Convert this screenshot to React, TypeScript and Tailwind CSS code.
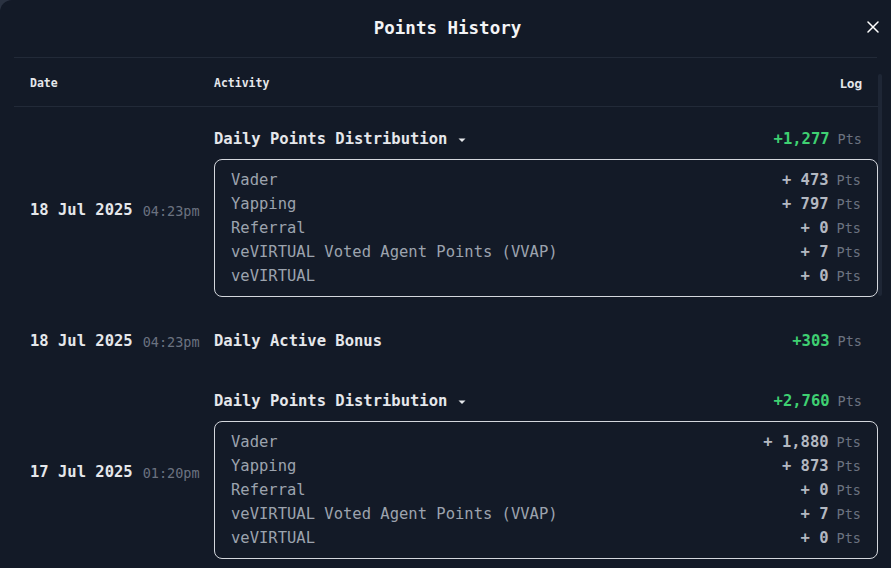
import { Fragment } from 'react';

type Detail = { label: string; amount: string };

type Entry = {
  date: string;
  time: string;
  title: string;
  total: string;
  details?: Detail[];
};

const ENTRIES: Entry[] = [
  {
    date: '18 Jul 2025',
    time: '04:23pm',
    title: 'Daily Points Distribution',
    total: '+1,277',
    details: [
      { label: 'Vader', amount: '473' },
      { label: 'Yapping', amount: '797' },
      { label: 'Referral', amount: '0' },
      { label: 'veVIRTUAL Voted Agent Points (VVAP)', amount: '7' },
      { label: 'veVIRTUAL', amount: '0' },
    ],
  },
  {
    date: '18 Jul 2025',
    time: '04:23pm',
    title: 'Daily Active Bonus',
    total: '+303',
  },
  {
    date: '17 Jul 2025',
    time: '01:20pm',
    title: 'Daily Points Distribution',
    total: '+2,760',
    details: [
      { label: 'Vader', amount: '1,880' },
      { label: 'Yapping', amount: '873' },
      { label: 'Referral', amount: '0' },
      { label: 'veVIRTUAL Voted Agent Points (VVAP)', amount: '7' },
      { label: 'veVIRTUAL', amount: '0' },
    ],
  },
];

const Pts = () => (
  <span className="ml-2 text-[13.5px] text-[#6b7280]">Pts</span>
);

const Caret = () => (
  <svg width="10" height="10" viewBox="0 0 10 10" className="ml-2.5">
    <path d="M1.5 3.5h7L5 7z" fill="#e5e7eb" />
  </svg>
);

const HistoryRow = ({ entry }: { entry: Entry }) => (
  <div className="flex py-3.5">
    <div className="w-[200px] shrink-0 pl-4 pt-1 flex items-center whitespace-nowrap">
      <span className="text-[15.5px] font-bold text-[#e5e7eb]">{entry.date}</span>
      <span className="ml-2.5 text-[13.5px] text-[#6b7280]">{entry.time}</span>
    </div>
    <div className="flex-1 min-w-0">
      <div
        className={
          entry.details
            ? 'h-[34px] pt-1 flex items-center justify-between pr-4'
            : 'h-[30px] pt-1 flex items-center justify-between pr-4'
        }
      >
        <div className="flex items-center text-[15.5px] font-bold text-[#e5e7eb]">
          {entry.title}
          {entry.details && <Caret />}
        </div>
        <div className="flex items-baseline">
          <span className="text-[15.5px] font-bold text-[#3fd072]">{entry.total}</span>
          <Pts />
        </div>
      </div>
      {entry.details && (
        <div className="mt-1 rounded-lg border border-[#d4d7dd] px-4 py-2">
          {entry.details.map((d) => (
            <div key={d.label} className="h-6 pt-0.5 flex items-center justify-between">
              <span className="text-[15.5px] text-[#9ca3ae]">{d.label}</span>
              <div className="flex items-baseline">
                <span className="text-[15.5px] font-bold text-[#b3b8c1] whitespace-pre">
                  {'+ ' + d.amount}
                </span>
                <Pts />
              </div>
            </div>
          ))}
        </div>
      )}
    </div>
  </div>
);

export default function App() {
  return (
    <div className="h-screen bg-[#2a3241] font-['DejaVu_Sans_Mono',monospace]">
      <div className="h-screen overflow-hidden rounded-tl-xl bg-[#131a27]">
        <div className="h-[58px] mx-3.5 flex items-center justify-center relative border-b border-[#222a38]">
          <h1 className="text-[17.5px] font-bold text-[#f3f4f6] pl-1">Points History</h1>
          <button className="absolute right-[-2px] top-[21px] text-white">
            <svg width="12" height="12" viewBox="0 0 12 12" className="block">
              <path d="M1 1l10 10M11 1L1 11" stroke="currentColor" strokeWidth="1.5" strokeLinecap="round" />
            </svg>
          </button>
        </div>
        <div className="flex ml-3.5 mr-[9px]">
          <div className="flex-1 min-w-0">
            <div className="h-[49px] pt-1 flex items-center border-b border-[#222a38] text-[11.5px] font-bold text-[#e5e7eb]">
              <div className="w-[200px] pl-4">Date</div>
              <div className="flex-1">Activity</div>
              <div className="pr-4 font-['Inter',sans-serif] text-[12px]">Log</div>
            </div>
            {ENTRIES.map((entry, i) => (
              <Fragment key={i}>
                <HistoryRow entry={entry} />
              </Fragment>
            ))}
          </div>
          <div className="w-1 shrink-0 pt-4">
            <div className="h-[222px] rounded-full bg-[#1e2635]" />
          </div>
        </div>
      </div>
    </div>
  );
}
